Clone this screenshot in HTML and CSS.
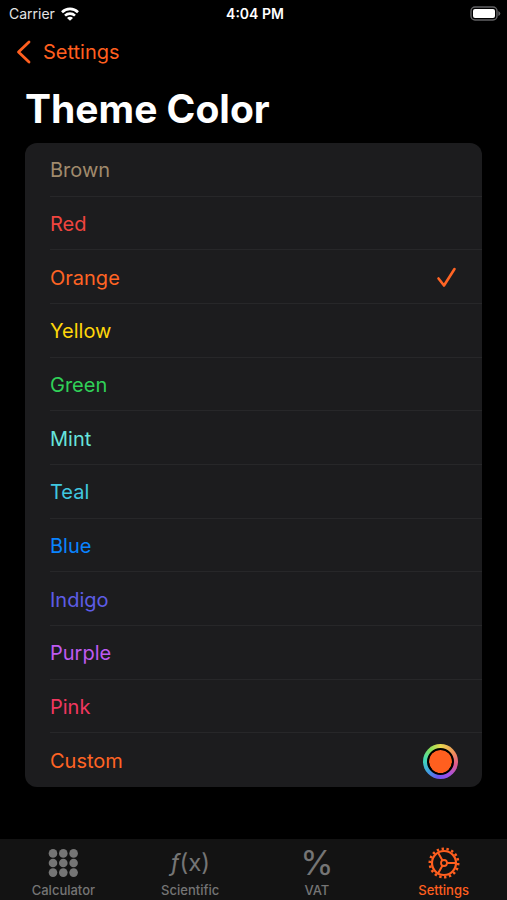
FILE: index.html
```html
<!DOCTYPE html>
<html lang="en">
<head>
<meta charset="utf-8">
<meta name="viewport" content="width=device-width, initial-scale=1">
<title>Theme Color</title>
<link rel="stylesheet" href="styles.css">
</head>
<body>
<div class="status">
  <div class="carrier">Carrier
    <svg width="18" height="14" viewBox="0 0 18 14" fill="none" stroke="currentColor" stroke-width="2.6"><path d="M1 5.2a11.4 11.4 0 0 1 16 0M4 8.6a7.2 7.2 0 0 1 10 0"/><path d="M9 13.8 6 10.9a4.2 4.2 0 0 1 6 0Z" fill="currentColor" stroke="none"/></svg>
  </div>
  <div class="time">4:04 PM</div>
  <div class="battery">
    <svg width="31" height="15" viewBox="0 0 31 15"><rect x="1" y="1" width="26" height="13" rx="4" fill="none" stroke="#626264" stroke-width="1.4"/><rect x="3" y="3" width="22" height="9" rx="2" fill="#fff"/><path d="M28.3 5v5q2-1 2-2.5t-2-2.5Z" fill="#626264"/></svg>
  </div>
</div>
<header class="nav">
  <a class="back" href="#settings">
    <svg width="16" height="26" viewBox="0 0 16 26" fill="none" stroke="currentColor" stroke-width="2.8" stroke-linecap="round" stroke-linejoin="round"><path d="M13 3 2.5 13 13 23"/></svg>
    Settings
  </a>
</header>
<main>
  <h1>Theme Color</h1>
  <form class="list">
    <label class="row brown"><span>Brown</span><input type="radio" name="color"></label>
    <label class="row red"><span>Red</span><input type="radio" name="color"></label>
    <label class="row orange"><span>Orange</span><input type="radio" name="color" checked><svg class="check" width="22" height="22" viewBox="0 0 22 22" fill="none" stroke="currentColor" stroke-width="2.6" stroke-linecap="round" stroke-linejoin="round"><path d="M2.5 11.5 8 18.5 18.5 2"/></svg></label>
    <label class="row yellow"><span>Yellow</span><input type="radio" name="color"></label>
    <label class="row green"><span>Green</span><input type="radio" name="color"></label>
    <label class="row mint"><span>Mint</span><input type="radio" name="color"></label>
    <label class="row teal"><span>Teal</span><input type="radio" name="color"></label>
    <label class="row blue"><span>Blue</span><input type="radio" name="color"></label>
    <label class="row indigo"><span>Indigo</span><input type="radio" name="color"></label>
    <label class="row purple"><span>Purple</span><input type="radio" name="color"></label>
    <label class="row pink"><span>Pink</span><input type="radio" name="color"></label>
    <label class="row orange"><span>Custom</span><span class="well"><input type="color" value="#ff5f1f"></span></label>
  </form>
</main>
<nav class="tabs">
  <a href="#calculator">
    <span class="icon"><svg width="30" height="30" viewBox="0 0 30 30" fill="currentColor"><circle cx="5" cy="5.4" r="4.3"/><circle cx="15.3" cy="5.4" r="4.3"/><circle cx="25.6" cy="5.4" r="4.3"/><circle cx="5" cy="15" r="4.3"/><circle cx="15.3" cy="15" r="4.3"/><circle cx="25.6" cy="15" r="4.3"/><circle cx="5" cy="24.6" r="4.3"/><circle cx="15.3" cy="24.6" r="4.3"/><circle cx="25.6" cy="24.6" r="4.3"/></svg></span>
    Calculator
  </a>
  <a href="#scientific"><span class="icon fx"><i>ƒ</i>(x)</span>Scientific</a>
  <a href="#vat"><span class="icon percent">%</span>VAT</a>
  <a class="active" href="#settings" aria-current="page">
    <span class="icon"><svg width="32" height="32" viewBox="-16 -16 32 32" fill="none" stroke="currentColor"><circle r="12" stroke-width="2.2"/><circle r="14.2" stroke-width="2.6" stroke-dasharray="2.4 2.557" pathLength="89.22"/><circle r="3" stroke-width="1.8"/><path d="M3 0H12M-1.5-2.6-6-10.4M-1.5 2.6-6 10.4" stroke-width="2"/></svg></span>
    Settings
  </a>
</nav>
</body>
</html>
```
FILE: styles.css
```css
* { box-sizing: border-box; }

body {
  margin: 0;
  min-height: 100vh;
  display: flex;
  flex-direction: column;
  background: #000;
  color: #fff;
  font-family: Inter, "Liberation Sans", sans-serif;
  font-size: 20px;
}

a { color: inherit; text-decoration: none; }
svg { display: block; flex: none; }

.status {
  display: grid;
  grid-template-columns: 1fr auto 1fr;
  align-items: center;
  height: 27px;
  padding: 0 6px 0 9px;
  font-size: 14px;
}
.carrier { display: flex; align-items: center; gap: 6px; color: #e4e4e4; }
.carrier svg { color: #fff; }
.time { font-weight: 600; }
.battery { justify-self: end; }

.nav {
  display: flex;
  align-items: center;
  height: 50px;
  padding: 0 16px;
  color: #ff5f1f;
}
.back { display: flex; align-items: center; gap: 11px; }

main {
  flex: 1;
  display: flex;
  flex-direction: column;
  padding: 8px 25px 52px;
}
h1 {
  margin: 0 0 10px;
  font-size: 39px;
  line-height: 48px;
  font-weight: 700;
}

.list {
  flex: 1;
  display: grid;
  grid-auto-rows: 1fr;
  background: #1c1c1e;
  border-radius: 12px;
  overflow: hidden;
}
.row {
  display: flex;
  align-items: center;
  justify-content: space-between;
  margin-left: 25px;
  padding: 2px 24px 0 0;
  border-bottom: 1px solid #272729;
}
.row:last-child { border-bottom: 0; }
.row input[type="radio"] {
  appearance: none;
  width: 0;
  height: 0;
  margin: 0;
}
.row .check { margin-left: auto; }

.well {
  display: flex;
  padding: 4px;
  border-radius: 50%;
  background: conic-gradient(#e8d84f, #f08a5c 60deg, #e05a8c 100deg, #a04fe8 150deg, #6a55f0 190deg, #3f9fe0 230deg, #40d8b8 275deg, #86e05a 320deg, #e8d84f);
}
.well input {
  appearance: none;
  width: 27px;
  height: 27px;
  margin: 0;
  padding: 0;
  border: 2px solid #000;
  border-radius: 50%;
  background: #000;
}
.well input::-webkit-color-swatch-wrapper { padding: 0; }
.well input::-webkit-color-swatch { border: 0; border-radius: 50%; }

.brown { color: #a08a6c; }
.red { color: #f0453f; }
.orange { color: #ff6424; }
.yellow { color: #ffd60a; }
.green { color: #30d158; }
.mint { color: #66e4dc; }
.teal { color: #40c8e0; }
.blue { color: #0a84ff; }
.indigo { color: #5e5ce6; }
.purple { color: #bf5af2; }
.pink { color: #f0375f; }

.tabs {
  display: grid;
  grid-template-columns: repeat(4, 1fr);
  height: 61px;
  padding-top: 7px;
  background: #131313;
  color: #757575;
  font-size: 13px;
  font-weight: 500;
  line-height: 16px;
}
.tabs a {
  display: flex;
  flex-direction: column;
  align-items: center;
  gap: 2px;
}
.tabs .active { color: #ff5f1f; }
.icon {
  display: flex;
  align-items: center;
  justify-content: center;
  height: 34px;
  line-height: 34px;
  font-weight: 400;
}
.fx { font-size: 24px; }
.percent { font-size: 34px; }
```
